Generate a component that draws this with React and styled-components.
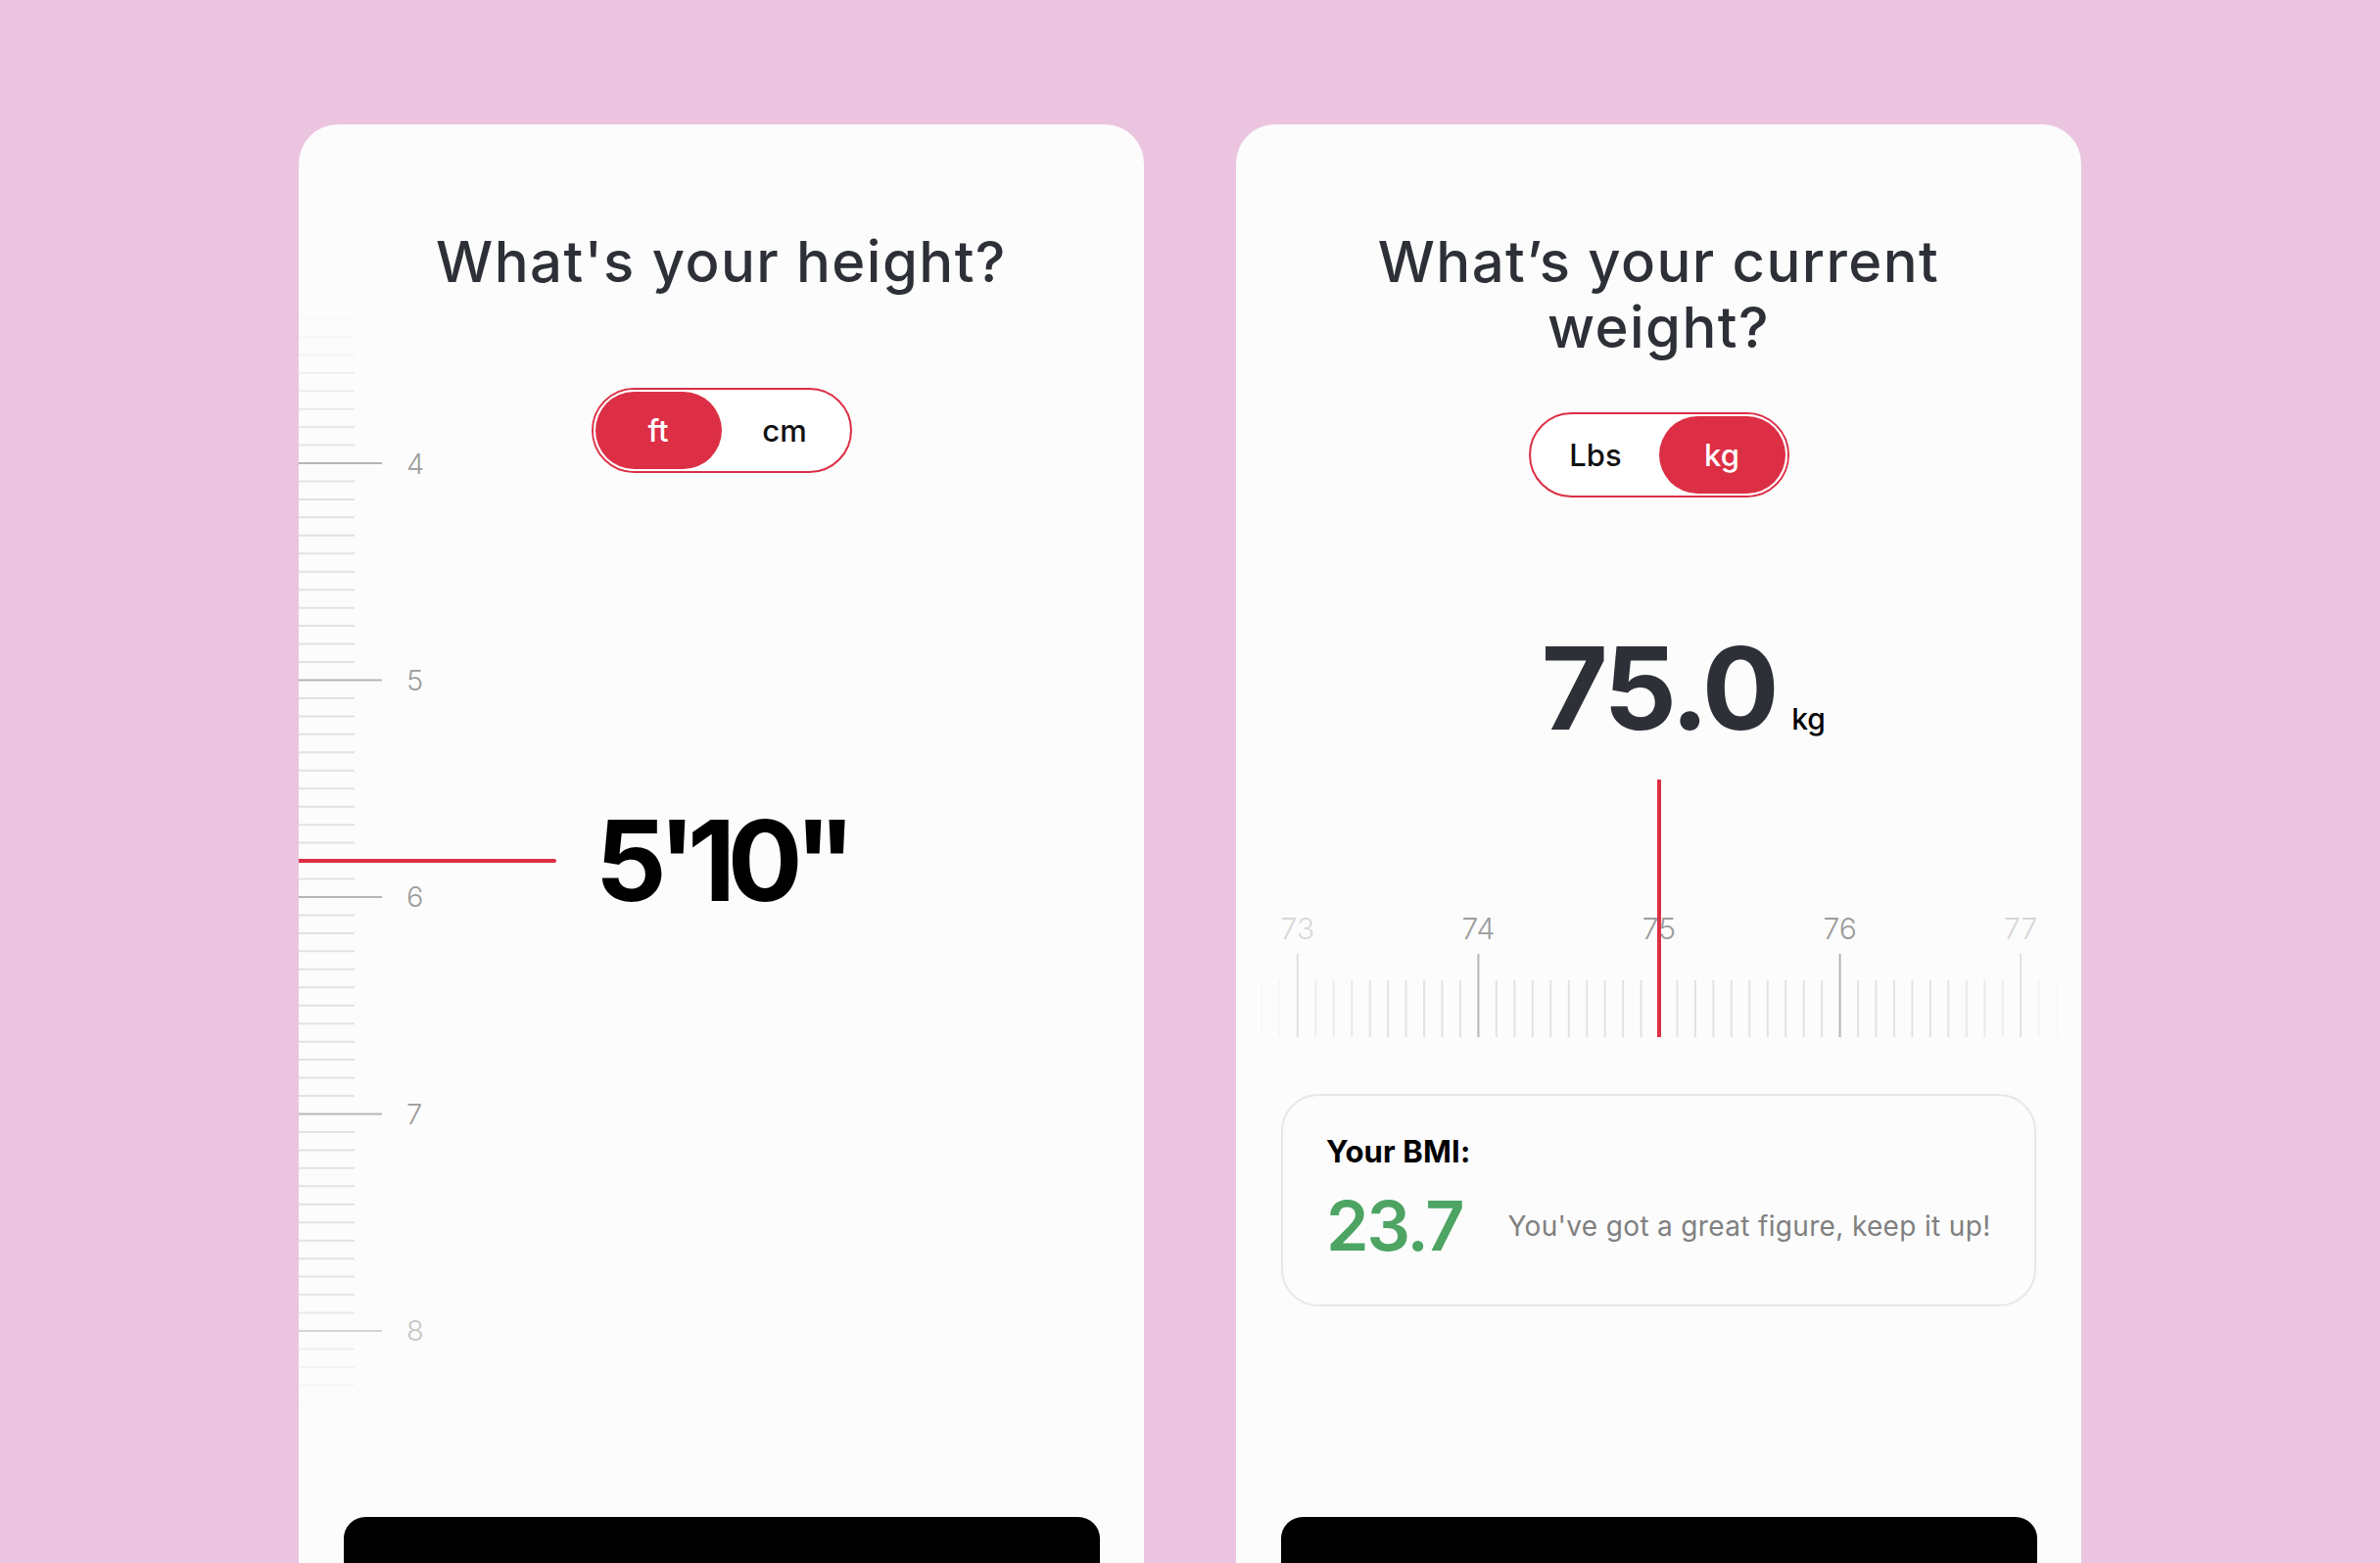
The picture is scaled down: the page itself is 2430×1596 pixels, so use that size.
import React from "react";
import styled, { createGlobalStyle } from "styled-components";

const RED = "#dc2f45";
const INCH = 18.458;

const GlobalStyle = createGlobalStyle`
  html, body {
    margin: 0;
    padding: 0;
    height: 1596px;
    overflow: hidden;
    background: #ebc4e0;
    font-family: Inter, "Noto Sans", sans-serif;
  }
  * { box-sizing: border-box; }
`;

const Page = styled.main`
  display: flex;
  justify-content: center;
  gap: 94px;
  padding-top: 127px;
  height: 1596px;
  overflow: hidden;
`;

const Card = styled.section`
  width: 863px;
  height: 1540px;
  flex-shrink: 0;
  background: #fcfcfc;
  border-radius: 40px;
  display: flex;
  flex-direction: column;
  align-items: center;
  padding-top: 107px;
  overflow: hidden;
`;

const Title = styled.h1`
  margin: 0;
  font-family: Inter, sans-serif;
  font-weight: 500;
  font-size: 58px;
  line-height: 67px;
  letter-spacing: 0.025em;
  color: #2e3038;
  text-align: center;
`;

const Toggle = styled.div`
  display: flex;
  width: 266px;
  height: 87px;
  padding: 2px;
  border: 2px solid ${RED};
  border-radius: 44px;
  background: #fff;
  margin-top: ${(p) => p.$offset}px;
`;

const ToggleOption = styled.button`
  flex: 1;
  border: none;
  border-radius: 40px;
  font-family: Inter, sans-serif;
  font-size: 31px;
  font-weight: 500;
  cursor: pointer;
  background: ${(p) => (p.$active ? RED : "transparent")};
  color: ${(p) => (p.$active ? "#fff" : "#111")};
  box-shadow: ${(p) => (p.$active ? "0 0 0 2px #fff" : "none")};
`;

const PickerRow = styled.div`
  align-self: stretch;
  display: flex;
  position: relative;
  margin-top: 18px;
  height: 1120px;
`;

const RulerColumn = styled.div`
  width: 130px;
  flex-shrink: 0;
`;

const Indicator = styled.div`
  position: absolute;
  left: 0;
  top: 558px;
  width: 263px;
  height: 4px;
  border-radius: 0 2px 2px 0;
  background: ${RED};
`;

const CenterColumn = styled.div`
  flex: 1;
  padding-right: 130px;
  display: flex;
  flex-direction: column;
  align-items: center;
`;

const HeightValue = styled.div`
  margin-top: 331px;
  font-family: Inter, sans-serif;
  font-weight: 700;
  font-size: 114px;
  line-height: 130px;
  letter-spacing: -0.075em;
  color: #000;
`;

const WeightRow = styled.div`
  align-self: stretch;
  display: grid;
  grid-template-columns: 1fr auto 1fr;
  align-items: baseline;
  margin-top: 130px;
`;

const WeightValue = styled.div`
  grid-column: 2;
  font-family: Inter, sans-serif;
  font-weight: 700;
  font-size: 117px;
  line-height: 130px;
  letter-spacing: -0.03em;
  color: #2e3038;
`;

const WeightUnit = styled.span`
  grid-column: 3;
  justify-self: start;
  margin-left: 16px;
  font-family: Inter, sans-serif;
  font-weight: 500;
  font-size: 30px;
  color: #000;
`;

const WeightRuler = styled.svg`
  display: block;
  align-self: stretch;
  margin-top: 28px;
`;

const BmiBox = styled.div`
  align-self: stretch;
  margin: 58px 46px 0;
  height: 217px;
  border: 2px solid #e7e7e7;
  border-radius: 38px;
  padding: 37px 40px 0 44px;
  display: flex;
  flex-direction: column;
`;

const BmiLabel = styled.div`
  font-family: Inter, sans-serif;
  font-weight: 700;
  font-size: 31px;
  line-height: 40px;
  letter-spacing: 0.005em;
  color: #000;
`;

const BmiRow = styled.div`
  display: flex;
  align-items: center;
  gap: 46px;
  margin-top: 16px;
`;

const BmiValue = styled.div`
  flex-shrink: 0;
  font-family: Inter, sans-serif;
  font-weight: 600;
  font-size: 70px;
  line-height: 80px;
  letter-spacing: -0.03em;
  color: #4da463;
`;

const BmiMessage = styled.div`
  white-space: nowrap;
  font-family: Inter, sans-serif;
  font-weight: 400;
  font-size: 28px;
  color: #808080;
  letter-spacing: 0.012em;
`;

const ContinueButton = styled.button`
  margin-top: auto;
  margin-bottom: 18px;
  width: 772px;
  height: 100px;
  border: none;
  border-radius: 22px;
  background: #000;
  flex-shrink: 0;
`;

function HeightRuler() {
  const ticks = [];
  for (let i = -8; i <= 52; i++) {
    const y = 154 + i * INCH;
    const major = i % 12 === 0;
    const d = Math.abs(i - 22);
    const op = d <= 22 ? 1 : Math.max(0.08, 1 - (d - 22) / 9);
    ticks.push(
      <g key={i} opacity={op}>
        <line
          x1={0}
          x2={major ? 85 : 57}
          y1={y}
          y2={y}
          stroke={major ? "#b5b5b5" : "#e2e2e2"}
          strokeWidth={2}
        />
        {major && (
          <text
            x={110}
            y={y}
            dominantBaseline="central"
            fontFamily="Inter, sans-serif"
            fontSize={29}
            fontWeight={300}
            fill="#9c9c9c"
          >
            {4 + i / 12}
          </text>
        )}
      </g>
    );
  }
  return (
    <svg width={140} height={1120} viewBox="0 0 140 1120" style={{ overflow: "visible", display: "block" }}>
      {ticks}
    </svg>
  );
}

function WeightScale() {
  const cx = 432;
  const items = [];
  for (let k = -22; k <= 22; k++) {
    const x = cx + k * INCH;
    const major = k % 10 === 0;
    const a = Math.abs(k);
    const op = a <= 15 ? 1 : Math.max(0.08, 1 - (a - 15) / 8);
    items.push(
      <g key={k} opacity={op}>
        <line
          x1={x}
          x2={x}
          y1={major ? 178 : 205}
          y2={263}
          stroke={major ? "#b5b5b5" : "#e2e2e2"}
          strokeWidth={2}
        />
        {major && (
          <text
            x={x}
            y={152}
            textAnchor="middle"
            dominantBaseline="central"
            fontFamily="Inter, sans-serif"
            fontSize={30}
            fontWeight={300}
            fill="#9c9c9c"
          >
            {75 + k / 10}
          </text>
        )}
      </g>
    );
  }
  return (
    <WeightRuler width={863} height={263} viewBox="0 0 863 263">
      {items}
      <rect x={cx - 2} y={0} width={4} height={263} fill={RED} />
    </WeightRuler>
  );
}

export default function App() {
  return (
    <>
      <GlobalStyle />
      <Page>
        <Card>
          <Title>What's your height?</Title>
          <PickerRow>
            <RulerColumn>
              <HeightRuler />
            </RulerColumn>
            <Indicator />
            <CenterColumn>
              <Toggle $offset={77}>
                <ToggleOption $active>ft</ToggleOption>
                <ToggleOption>cm</ToggleOption>
              </Toggle>
              <HeightValue>5'10"</HeightValue>
            </CenterColumn>
          </PickerRow>
          <ContinueButton aria-label="Continue" />
        </Card>
        <Card>
          <Title>
            What’s your current
            <br />
            weight?
          </Title>
          <Toggle $offset={53}>
            <ToggleOption>Lbs</ToggleOption>
            <ToggleOption $active>kg</ToggleOption>
          </Toggle>
          <WeightRow>
            <WeightValue>75.0</WeightValue>
            <WeightUnit>kg</WeightUnit>
          </WeightRow>
          <WeightScale />
          <BmiBox>
            <BmiLabel>Your BMI:</BmiLabel>
            <BmiRow>
              <BmiValue>23.7</BmiValue>
              <BmiMessage>You've got a great figure, keep it up!</BmiMessage>
            </BmiRow>
          </BmiBox>
          <ContinueButton aria-label="Continue" />
        </Card>
      </Page>
    </>
  );
}
